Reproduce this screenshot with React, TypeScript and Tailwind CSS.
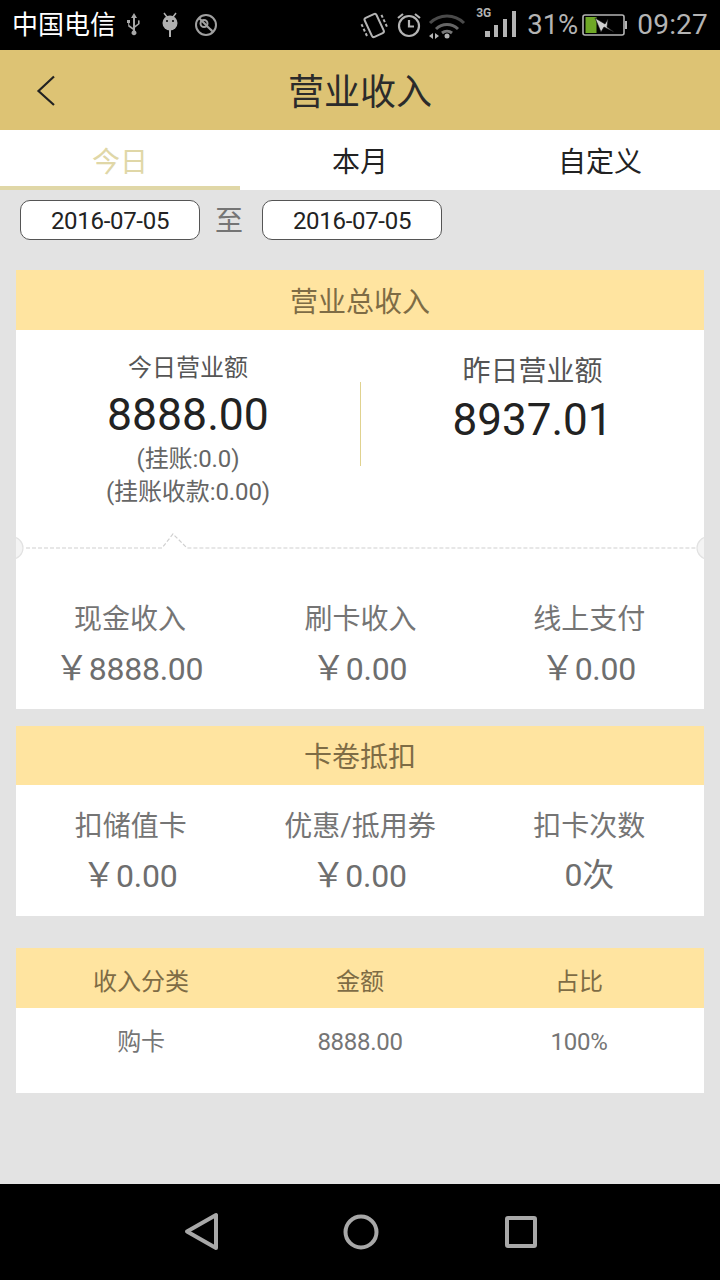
const font = { fontFamily: 'Roboto, "Noto Sans CJK SC", sans-serif' };

function Stat({ label, value, yen = true }: { label: string; value: string; yen?: boolean }) {
  return (
    <div className="flex flex-col items-center">
      <div className="text-[28px] leading-[36px] text-[#757575]">{label}</div>
      <div className={`mt-[11px] text-[32px] leading-[38px] text-[#6e6e6e] tracking-[-0.25px] flex items-baseline ${yen ? 'pr-[2px]' : ''}`}>
        {yen && <span className="w-[34px] text-[34px] tracking-normal">￥</span>}
        <span>{value}</span>
      </div>
    </div>
  );
}

function SectionHead({ title, h = 'h-[60px]' }: { title: string; h?: string }) {
  return <div className={`${h} bg-[#ffe4a0] flex items-center justify-center pt-[5px] text-[28px] text-[#7e6c45]`}>{title}</div>;
}

export default function App() {
  return (
    <div style={font} className="w-[720px] h-[1280px] bg-[#e3e3e3] flex flex-col overflow-hidden">
      {/* status bar */}
      <div className="h-[50px] bg-black flex items-center text-[#b9b9b9] shrink-0">
        <div className="ml-[12px] text-[26px] leading-[50px] text-white w-[104px] whitespace-nowrap">中国电信</div>
        <svg width="20" height="26" viewBox="0 0 20 26" className="ml-[8px]" fill="#a8a8a8">
          <path d="M10 1l3 5h-2v12.500a2.500 2.500 0 1 1-2 0V6H7z" />
          <path d="M3 8h3v3H5.200v2l4 3v2l-5-3.500V11H3zM14 8.500a1.600 1.600 0 0 1 1.600 0V12l-5 4v-2l3.400-2.500z" />
        </svg>
        <svg width="24" height="28" viewBox="0 0 24 28" className="ml-[14px]" fill="#b0b0b0">
          <circle cx="12" cy="12" r="7.500" />
          <path d="M6 2l3 4M18 2l-3 4" stroke="#b0b0b0" strokeWidth="1.500" />
          <rect x="11" y="19" width="2" height="7" />
          <circle cx="9" cy="10" r="1" fill="#000" />
          <circle cx="15" cy="10" r="1" fill="#000" />
        </svg>
        <svg width="24" height="24" viewBox="0 0 24 24" className="ml-[12px]" fill="none" stroke="#a0a0a0" strokeWidth="2">
          <circle cx="12" cy="12" r="10" />
          <circle cx="10" cy="10.500" r="3.500" />
          <path d="M12.500 13l5.500 4.500M5 5l14 14" />
        </svg>
        <div className="ml-auto flex items-center h-full">
          <svg width="32" height="30" viewBox="0 0 32 30" fill="none" stroke="#b4b4b4">
            <g transform="rotate(-25 16 15)">
              <rect x="9.500" y="5" width="13" height="21" rx="2" strokeWidth="2" />
              <path d="M5 9v13M27 9v13" strokeWidth="2" strokeDasharray="3 2" />
            </g>
          </svg>
          <svg width="28" height="28" viewBox="0 0 28 28" className="ml-[5px]" fill="none" stroke="#b4b4b4" strokeWidth="2.200">
            <circle cx="14" cy="15" r="10" />
            <path d="M14 9v6.500h5" />
            <path d="M3 7l5-4M25 7l-5-4" />
          </svg>
          <svg width="38" height="28" viewBox="0 0 38 28" className="ml-[5px]" fill="none">
            <path d="M2 12a24 24 0 0 1 34 0" stroke="#4a4a4a" strokeWidth="3" />
            <path d="M8 18a16 16 0 0 1 22 0" stroke="#666" strokeWidth="3" />
            <path d="M14 22a8 8 0 0 1 10 0" stroke="#777" strokeWidth="3" />
            <circle cx="19" cy="25" r="2.500" fill="#b4b4b4" />
            <path d="M1 25l4-3v6zM7 22l4 3-4 3z" fill="#b4b4b4" />
          </svg>
          <div className="relative w-[34px] h-[28px] ml-[19px]">
            <span className="absolute left-[-9px] top-[-5px] text-[12px] font-bold leading-[14px] text-[#b4b4b4]">3G</span>
            <svg width="34" height="28" viewBox="0 0 34 28" fill="#b4b4b4">
              <rect x="0" y="20" width="5" height="6" />
              <rect x="9" y="14" width="4" height="12" />
              <rect x="18" y="8" width="4" height="18" />
              <rect x="27" y="0" width="4" height="26" />
            </svg>
          </div>
          <div className="ml-[8px] text-[27.500px] leading-[50px] text-[#b4b4b4]">31%</div>
          <svg width="46" height="24" viewBox="0 0 46 24" className="ml-[4px]" fill="none">
            <rect x="1" y="2" width="41" height="20" rx="2" stroke="#b4b4b4" strokeWidth="1.600" />
            <rect x="3.500" y="4" width="11" height="16" fill="#6fa826" />
            <rect x="43" y="8" width="2" height="8" fill="#b4b4b4" />
            <path d="M13 5l10 6 3-5-1 8 7 5-10-5-3 5z" fill="#d0d0d0" stroke="#111" strokeWidth="0.600" />
          </svg>
          <div className="ml-[9px] mr-[12px] text-[28px] leading-[50px] text-[#b4b4b4] tracking-[0.200px]">09:27</div>
        </div>
      </div>

      {/* header */}
      <div className="h-[80px] bg-[#ddc374] flex items-center justify-center pt-[5px] relative shrink-0">
        <svg width="24" height="34" viewBox="0 0 24 34" className="absolute left-[34px] top-[24px]" fill="none" stroke="#222" strokeWidth="2.200">
          <path d="M20 2.500L4.500 17 20 31" />
        </svg>
        <span className="text-[36px] text-[#2b2b2b]">营业收入</span>
      </div>

      {/* tabs */}
      <div className="h-[60px] bg-white flex text-[28px] shrink-0">
        <div className="w-[240px] h-full flex items-center justify-center pt-[10px] border-b-[4px] border-[#e0d7a7] text-[#e0d7a7]">今日</div>
        <div className="w-[240px] h-full flex items-center justify-center pt-[6px] text-[#222]">本月</div>
        <div className="w-[240px] h-full flex items-center justify-center pt-[6px] text-[#222]">自定义</div>
      </div>

      {/* dates */}
      <div className="h-[80px] shrink-0 pt-[10px] pl-[20px] flex items-start">
        <div className="w-[180px] h-[40px] bg-white border border-[#555] rounded-[10px] flex items-center justify-center pt-[2px] text-[24px] tracking-[-0.300px] text-[#222]">2016-07-05</div>
        <div className="w-[62px] h-[40px] flex items-center justify-center text-[28px] text-[#757575] pt-[4px] pr-[4px]">至</div>
        <div className="w-[180px] h-[40px] bg-white border border-[#555] rounded-[10px] flex items-center justify-center pt-[2px] text-[24px] tracking-[-0.300px] text-[#222]">2016-07-05</div>
      </div>

      {/* total card */}
      <div className="mx-[16px] bg-white shrink-0 h-[439px] flex flex-col">
        <SectionHead title="营业总收入" />
        <div className="flex h-[196px] shrink-0 relative">
          <div className="w-[344px] flex flex-col items-center pt-[21px]">
            <div className="text-[24px] leading-[34px] text-[#555]">今日营业额</div>
            <div className="text-[44.500px] leading-[52px] mt-[4px] text-[#222]">8888.00</div>
            <div className="text-[24px] leading-[33px] mt-[2px] tracking-[-0.100px] text-[#666]">(挂账:0.0)</div>
            <div className="text-[24px] leading-[33px] tracking-[-0.100px] text-[#666]">(挂账收款:0.00)</div>
          </div>
          <div className="w-px h-[84px] bg-[#e0d28f] mt-[52px]" />
          <div className="flex-1 flex flex-col items-center pt-[25px]">
            <div className="text-[28px] leading-[34px] text-[#555]">昨日营业额</div>
            <div className="text-[44px] leading-[52px] mt-[5px] text-[#222]">8937.01</div>
          </div>
        </div>
        <div className="relative h-[40px] shrink-0">
          <svg width="688" height="40" viewBox="0 0 688 40" fill="none" stroke="#d0d0d0" strokeWidth="1.200">
            <path d="M10 22H146L157 8 171 22H680" strokeDasharray="4 2" />
            <circle cx="-4" cy="22" r="11" fill="#f4f4f4" stroke="#e2e2e2" />
            <circle cx="692" cy="22" r="11" fill="#f4f4f4" stroke="#e2e2e2" />
          </svg>
        </div>
        <div className="grid grid-cols-3 pt-[36px]">
          <div className="-ml-[1px] w-[230px]"><Stat label="现金收入" value="8888.00" /></div>
          <div className="ml-[1px]"><Stat label="刷卡收入" value="0.00" /></div>
          <div><Stat label="线上支付" value="0.00" /></div>
        </div>
      </div>

      {/* card deduction */}
      <div className="mx-[16px] mt-[17px] bg-white shrink-0 h-[190px]">
        <SectionHead title="卡卷抵扣" h="h-[59px]" />
        <div className="grid grid-cols-3 pt-[24px]">
          <Stat label="扣储值卡" value="0.00" />
          <Stat label="优惠/抵用券" value="0.00" />
          <Stat label="扣卡次数" value="0次" yen={false} />
        </div>
      </div>

      {/* table */}
      <div className="mx-[16px] mt-[32px] bg-white shrink-0 h-[145px]">
        <div className="h-[60px] bg-[#ffe4a0] grid grid-cols-[250px_188px_250px] items-center pt-[7px] text-center text-[24px] text-[#7e6c45]">
          <div>收入分类</div>
          <div>金额</div>
          <div>占比</div>
        </div>
        <div className="h-[68px] grid grid-cols-[250px_188px_250px] items-center text-center text-[24px] tracking-[-0.300px] text-[#757575]">
          <div>购卡</div>
          <div>8888.00</div>
          <div>100%</div>
        </div>
      </div>

      <div className="flex-1" />

      {/* nav */}
      <div className="h-[96px] bg-black shrink-0 flex items-center relative">
        <svg width="36" height="40" viewBox="0 0 36 40" className="ml-[184px]" fill="none" stroke="#a8a8a8" strokeWidth="4" strokeLinejoin="round">
          <path d="M32 3v33L3 19.500z" />
        </svg>
        <svg width="36" height="36" viewBox="0 0 36 36" className="ml-[123px]" fill="none" stroke="#a8a8a8" strokeWidth="4">
          <circle cx="18" cy="18" r="15.500" />
        </svg>
        <svg width="32" height="32" viewBox="0 0 32 32" className="ml-[126px]" fill="none" stroke="#a8a8a8" strokeWidth="4" strokeLinejoin="round">
          <rect x="2" y="2" width="28" height="28" rx="1" />
        </svg>
      </div>
    </div>
  );
}
